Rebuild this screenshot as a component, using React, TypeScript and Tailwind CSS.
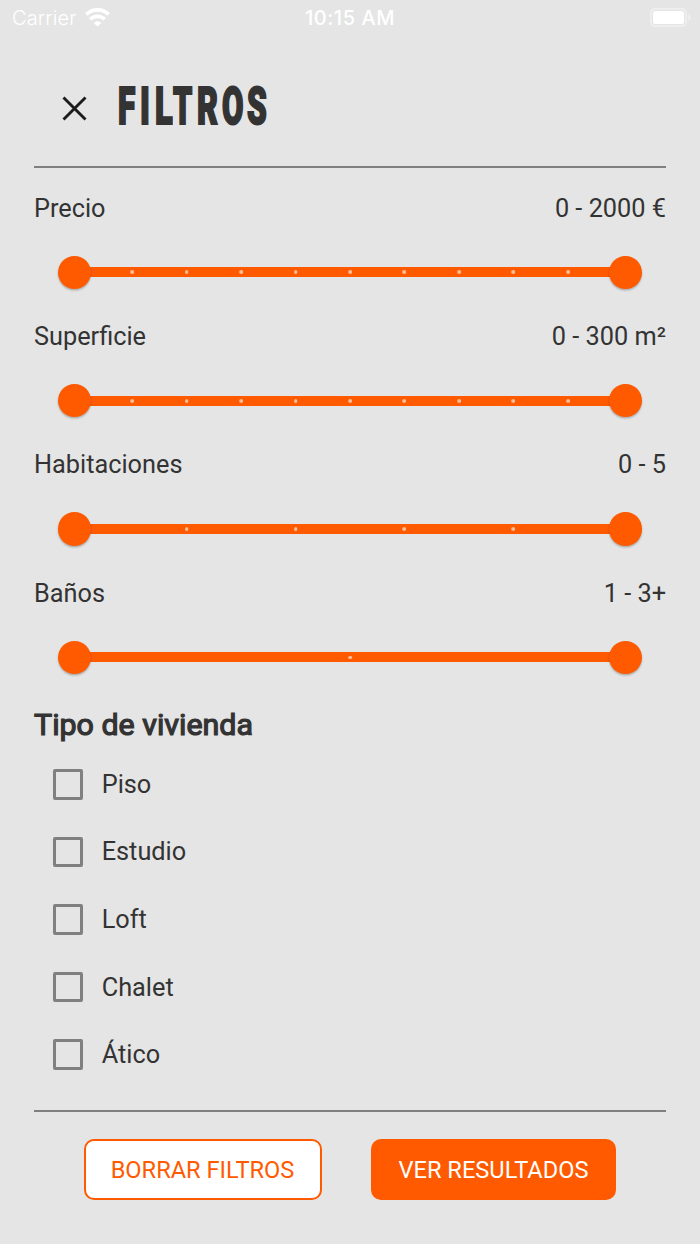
/**
 * Filters: full-screen panel for narrowing down the list of homes.
 *
 * Four range sliders, the kind of home, and the clear / apply buttons.
 */

import { useState } from "react";
import clsx from "clsx";

type Range = {
  label: string;
  value: string;
  steps: number;
};

const RANGES: Range[] = [
  { label: "Precio", value: "0 - 2000 €", steps: 10 },
  { label: "Superficie", value: "0 - 300 m²", steps: 10 },
  { label: "Habitaciones", value: "0 - 5", steps: 5 },
  { label: "Baños", value: "1 - 3+", steps: 2 },
];

const HOME_TYPES = ["Piso", "Estudio", "Loft", "Chalet", "Ático"];

// Condensed display lettering, each glyph squeezed to its own width
const TITLE = [
  { char: "F", box: "w-[22.3px]", scale: "scale-x-[0.62]" },
  { char: "I", box: "w-[15px]", scale: "scale-x-[0.64]" },
  { char: "L", box: "w-[17.6px]", scale: "scale-x-[0.64]" },
  { char: "T", box: "w-[23.8px]", scale: "scale-x-[0.6]" },
  { char: "R", box: "w-[25.2px]", scale: "scale-x-[0.63]" },
  { char: "O", box: "w-[25.2px]", scale: "scale-x-[0.61]" },
  { char: "S", box: "w-[20px]", scale: "scale-x-[0.62]" },
];

function StatusBar() {
  return (
    <div className="grid h-9 grid-cols-3 items-center pl-3 pr-[9px] font-['Inter'] text-[20px] text-white">
      <div className="flex items-center gap-[9px]">
        <span className="font-light tracking-[0.1px]">Carrier</span>
        <svg className="-mt-px" width="25" height="19" viewBox="0 0 25 19" fill="none" stroke="white" strokeWidth="3.7">
          <path d="M1.3 6.5a15.9 15.9 0 0 1 22.4 0" />
          <path d="M5.2 11.3a10.4 10.4 0 0 1 14.6 0" />
          <path d="M12.5 18.6l-3.8-3.7a5.4 5.4 0 0 1 7.6 0z" fill="white" stroke="none" />
        </svg>
      </div>
      <span className="-ml-[3px] text-center font-medium tracking-[0.55px]">10:15 AM</span>
      <svg className="-mt-px justify-self-end" width="41" height="19" viewBox="0 0 41 19" fill="none">
        <rect x="0.9" y="0.9" width="35.2" height="17.2" rx="4.6" stroke="white" strokeOpacity="0.4" strokeWidth="1.8" />
        <rect x="3" y="3" width="31" height="13" rx="2.6" fill="white" />
        <path d="M38.5 6.3c2.6 1 2.6 5.4 0 6.4z" fill="white" fillOpacity="0.5" />
      </svg>
    </div>
  );
}

function RangeSlider({ label, value, steps }: Range) {
  const ticks = Array.from({ length: steps - 1 }, (_, i) => ((i + 1) / steps) * 100);

  return (
    <div className="h-[128.4px]">
      <div className="flex h-8 items-center justify-between pt-[1.2px]">
        <span>{label}</span>
        <span>{value}</span>
      </div>
      <div className="relative mx-[23.7px] mt-[31.3px] flex h-[34px] items-center justify-between">
        <div className="absolute inset-x-4 h-2.5 bg-[#ff5a00]" />
        <div className="absolute inset-x-5 h-[3.7px]">
          {ticks.map((left) => (
            <span
              key={left}
              className="absolute size-[3.7px] -translate-x-1/2 rounded-full bg-white/60"
              style={{ left: `${left}%` }}
            />
          ))}
        </div>
        <span className="relative size-[33.6px] rounded-full bg-[#ff5a00] shadow-[0_1.5px_2px_rgba(0,0,0,0.25)]" />
        <span className="relative size-[33.6px] rounded-full bg-[#ff5a00] shadow-[0_1.5px_2px_rgba(0,0,0,0.25)]" />
      </div>
    </div>
  );
}

export default function App() {
  const [selected, setSelected] = useState<string[]>([]);

  function toggle(type: string) {
    setSelected((prev) => (prev.includes(type) ? prev.filter((t) => t !== type) : [...prev, type]));
  }

  return (
    <div className="h-[1244px] w-[700px] overflow-hidden bg-[#e5e5e5] font-['Roboto',sans-serif] text-[25.3px] text-[#333]">
      <StatusBar />

      <div className="px-[34px]">
        {/* Header */}
        <header className="flex h-[131.5px] items-center border-b-2 border-[#808080] pl-7">
          <button aria-label="Cerrar" className="mt-4">
            <svg width="25" height="25" viewBox="0 0 25 25" stroke="#1c1c1c" strokeWidth="2.9">
              <path d="M1.5 1.5l22 22M23.5 1.5l-22 22" />
            </svg>
          </button>
          <h1
            aria-label="Filtros"
            className="ml-[31px] mt-[11px] flex text-[51px] leading-none font-black [-webkit-text-stroke:2px_#333]"
          >
            {TITLE.map(({ char, box, scale }) => (
              <span key={char} className={box}>
                <span className={clsx("inline-block origin-left", scale)}>{char}</span>
              </span>
            ))}
          </h1>
        </header>

        {/* Ranges */}
        <div className="pt-[24.5px]">
          {RANGES.map((range) => (
            <RangeSlider key={range.label} {...range} />
          ))}
        </div>

        {/* Kind of home */}
        <h2 className="mt-px text-[30.4px] leading-9 font-normal [-webkit-text-stroke:1.2px_#333]">Tipo de vivienda</h2>
        <div className="mt-2 pl-[18.5px]">
          {HOME_TYPES.map((type) => (
            <label key={type} className="flex h-[67.6px] items-center gap-[18.7px]">
              <input
                type="checkbox"
                checked={selected.includes(type)}
                onChange={() => toggle(type)}
                className="size-[30.5px] appearance-none rounded-[2px] border-3 border-[#808080] checked:bg-[#ff5a00]"
              />
              <span className="pt-[0.8px]">{type}</span>
            </label>
          ))}
        </div>

        {/* Actions */}
        <footer className="mt-[21px] flex border-t-2 border-[#808080] pt-[27px] pl-[49.5px] text-[23.6px]">
          <button
            onClick={() => setSelected([])}
            className="h-[61px] w-[238px] rounded-[10px] border-2 border-[#ff5a00] bg-white pt-[3px] text-[#ff5a00]"
          >
            BORRAR FILTROS
          </button>
          <button className="ml-[49.5px] h-[61px] w-[245px] rounded-[10px] bg-[#ff5a00] pt-[3px] text-white">
            VER RESULTADOS
          </button>
        </footer>
      </div>
    </div>
  );
}
